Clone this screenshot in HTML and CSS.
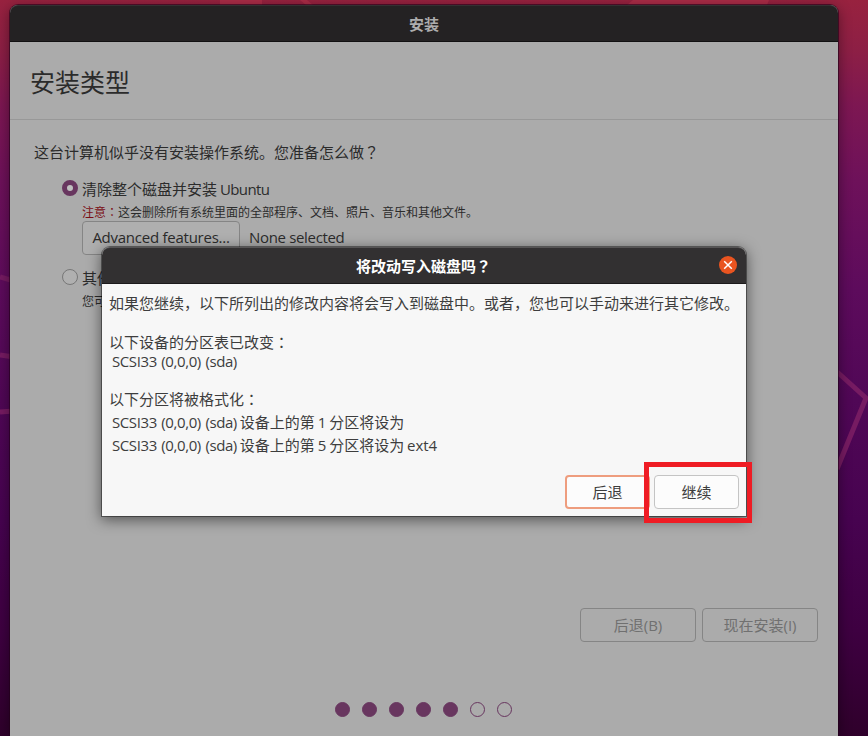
FILE: index.html
```html
<!DOCTYPE html>
<html lang="zh-CN">
<head>
<meta charset="utf-8">
<title>安装</title>
<link rel="stylesheet" href="styles.css">
</head>
<body>
<svg class="wallpaper" viewBox="0 0 868 736" aria-hidden="true">
  <path class="patch" d="M220 0H262V5H220ZM300 0H307L313 5H306ZM633 0H769L767 5H627Z"/>
  <path class="lines" d="M0 277L14 281M0 355L14 357M0 412L14 411M835 370L866 398L837 469"/>
</svg>
<main class="window">
  <header class="titlebar">安装</header>
  <h1 class="page-title">安装类型</h1>
  <section class="content">
    <p class="question">这台计算机似乎没有安装操作系统。您准备怎么做<span class="tc" lang="zh-TW">？</span></p>
    <div class="option">
      <span class="radio checked"></span>
      <div class="option-body">
        <div class="label">清除整个磁盘并安装 <span class="ubuntu">Ubuntu</span></div>
        <div class="note"><span class="warn">注意<span class="tc" lang="zh-TW">：</span></span>这会删除所有系统里面的全部程序、文档、照片、音乐和其他文件。</div>
        <div class="features"><button class="btn adv">Advanced features...</button><span class="none">None selected</span></div>
      </div>
    </div>
    <div class="option second">
      <span class="radio"></span>
      <div class="option-body">
        <div class="label">其他</div>
        <div class="note second-note">您可</div>
      </div>
    </div>
  </section>
  <div class="nav">
    <button class="btn disabled">后退<span>(B)</span></button>
    <button class="btn disabled">现在安装<span>(I)</span></button>
  </div>
  <div class="dots"><i class="on"></i><i class="on"></i><i class="on"></i><i class="on"></i><i class="on"></i><i></i><i></i></div>
</main>
<div class="dialog">
  <header class="dialog-title"><span class="dialog-heading">将改动写入磁盘吗<span class="tc" lang="zh-TW">？</span></span>
    <svg class="close" viewBox="0 0 18 18"><circle cx="9" cy="9" r="9"/><path d="M5.2 5.2L12.8 12.8M12.8 5.2L5.2 12.8"/></svg>
  </header>
  <div class="message">
    <p>如果您继续，以下所列出的修改内容将会写入到磁盘中。或者，您也可以手动来进行其它修改。</p>
    <p class="para">以下设备的分区表已改变<span class="tc" lang="zh-TW">：</span></p>
    <p class="item short"><span class="lat">SCSI33 (0,0,0) (sda)</span></p>
    <p class="para two">以下分区将被格式化<span class="tc" lang="zh-TW">：</span></p>
    <p class="item"><span class="lat">SCSI33 (0,0,0) (sda)</span> 设备上的第 1 分区将设为</p>
    <p class="item"><span class="lat">SCSI33 (0,0,0) (sda)</span> 设备上的第 5 分区将设为 <span class="ext">ext4</span></p>
  </div>
  <div class="actions"><button class="btn focus">后退</button><button class="btn plain">继续</button></div>
</div>
<div class="highlight"></div>
</body>
</html>
```
FILE: styles.css
```css
* { box-sizing: border-box; }
body {
  margin: 0;
  width: 868px;
  height: 736px;
  overflow: hidden;
  position: relative;
  font: 15px/23px "Open Sans", "Noto Sans CJK SC", sans-serif;
  text-spacing-trim: space-all;
  color: #2b2b2b;
  background: linear-gradient(#98223f 0, #8d1f45 50px, #7d1752 105px, #6e115a 180px, #5d0b5c 290px, #500756 400px, #470350 520px, #3e0041 630px, #2f002b 736px);
}
p, h1 { margin: 0; font-weight: 400; }
.tc { font-family: "Noto Sans CJK TC", sans-serif; line-height: 1; }
.wallpaper { position: absolute; inset: 0; width: 868px; height: 736px; }
.patch { fill: #aa2c47; }
.lines { fill: none; stroke: #761b62; stroke-width: 5; }
.window {
  position: relative;
  margin: 5px 0 0 10px;
  width: 828px;
  height: 731px;
  display: flex;
  flex-direction: column;
  background: #ababab;
  border-radius: 8px 8px 0 0;
  box-shadow: 0 0 0 1px rgba(35,0,25,.6), 0 3px 14px rgba(0,0,0,.45);
}
.titlebar {
  height: 37px;
  line-height: 37px;
  text-align: center;
  font-weight: 700;
  color: #adadad;
  background: #242223;
  border-top: 1px solid #343132;
  border-bottom: 1px solid #121112;
  border-radius: 8px 8px 0 0;
}
.page-title {
  height: 78px;
  padding-left: 20px;
  font-size: 25px;
  line-height: 80px;
  border-bottom: 1px solid #989898;
}
.content { padding: 21px 0 0 24px; height: 488px; }
.option { display: flex; padding: 13px 0 0 28px; gap: 4px; }
.radio { width: 16px; height: 16px; margin-top: 3px; border-radius: 50%; border: 1px solid #777; background: #b0b0b0; }
.radio.checked { border: 5px solid #68365f; background: #c0c0c0; }
.label { height: 24px; line-height: 25px; word-spacing: -1px; }
.ubuntu { letter-spacing: -.6px; }
.note { height: 20px; font-size: 12px; line-height: 24px; }
.warn { color: #7a0d14; }
.features { display: flex; align-items: center; gap: 9px; letter-spacing: -.33px; line-height: 21px; }
.none { padding-bottom: 2px; }
.btn {
  height: 34px;
  padding: 0;
  font: inherit;
  letter-spacing: inherit;
  color: inherit;
  border: 1px solid #858585;
  border-radius: 4px;
  background: transparent;
  white-space: nowrap;
}
.adv { width: 158px; padding-bottom: 2px; background: #afafaf; letter-spacing: -.25px; }
.second { padding-top: 11px; }
.nav { display: flex; justify-content: flex-end; gap: 6px; padding-right: 20px; }
.disabled { width: 116px; color: #707070; }
.dots { display: flex; justify-content: center; gap: 12px; margin: 60px 0 0 -2px; }
.dots i { width: 15px; height: 15px; border-radius: 50%; border: 1px solid #68365f; }
.dots .on { background: #68365f; }
.dialog {
  position: absolute;
  left: 102px;
  top: 247px;
  width: 644px;
  height: 269px;
  display: flex;
  flex-direction: column;
  color: #3d3d3d;
  background: #f7f7f7;
  border-radius: 8px 8px 0 0;
  box-shadow: 0 0 0 1px rgba(0,0,0,.4), 0 3px 14px 1px rgba(0,0,0,.5);
}
.dialog-title {
  display: flex;
  align-items: center;
  justify-content: center;
  position: relative;
  height: 37px;
  font-weight: 700;
  color: #fff;
  background: #323031;
  border-top: 1px solid #565455;
  border-bottom: 1px solid #1c1a1b;
  border-radius: 8px 8px 0 0;
}
.dialog-heading { padding: 2px 1px 0 0; }
.close { position: absolute; right: 9px; top: 8px; width: 18px; height: 18px; }
.close circle { fill: #e95420; }
.close path { stroke: #fff; stroke-width: 1.5; }
.message { padding: 8px 0 0 7px; height: 191px; white-space: nowrap; }
.message p { height: 23px; }
.message .para { margin-top: 16px; }
.message .item { padding-left: 3px; word-spacing: -1px; }
.message .short { height: 18px; line-height: 18px; margin-top: -2px; }
.message .two { margin-top: 18px; }
.message .lat { letter-spacing: -.4px; word-spacing: 1px; }
.ext { letter-spacing: -.1px; }
.actions { display: flex; justify-content: flex-end; gap: 4px; padding-right: 7px; }
.actions .btn { width: 85px; background: #fcfcfc; border-color: #c4c4c4; }
.actions .focus { border: 2px solid #ee9d7e; }
.highlight { position: absolute; left: 644px; top: 462px; width: 108px; height: 61px; border: 5px solid #ef1c24; }
```
